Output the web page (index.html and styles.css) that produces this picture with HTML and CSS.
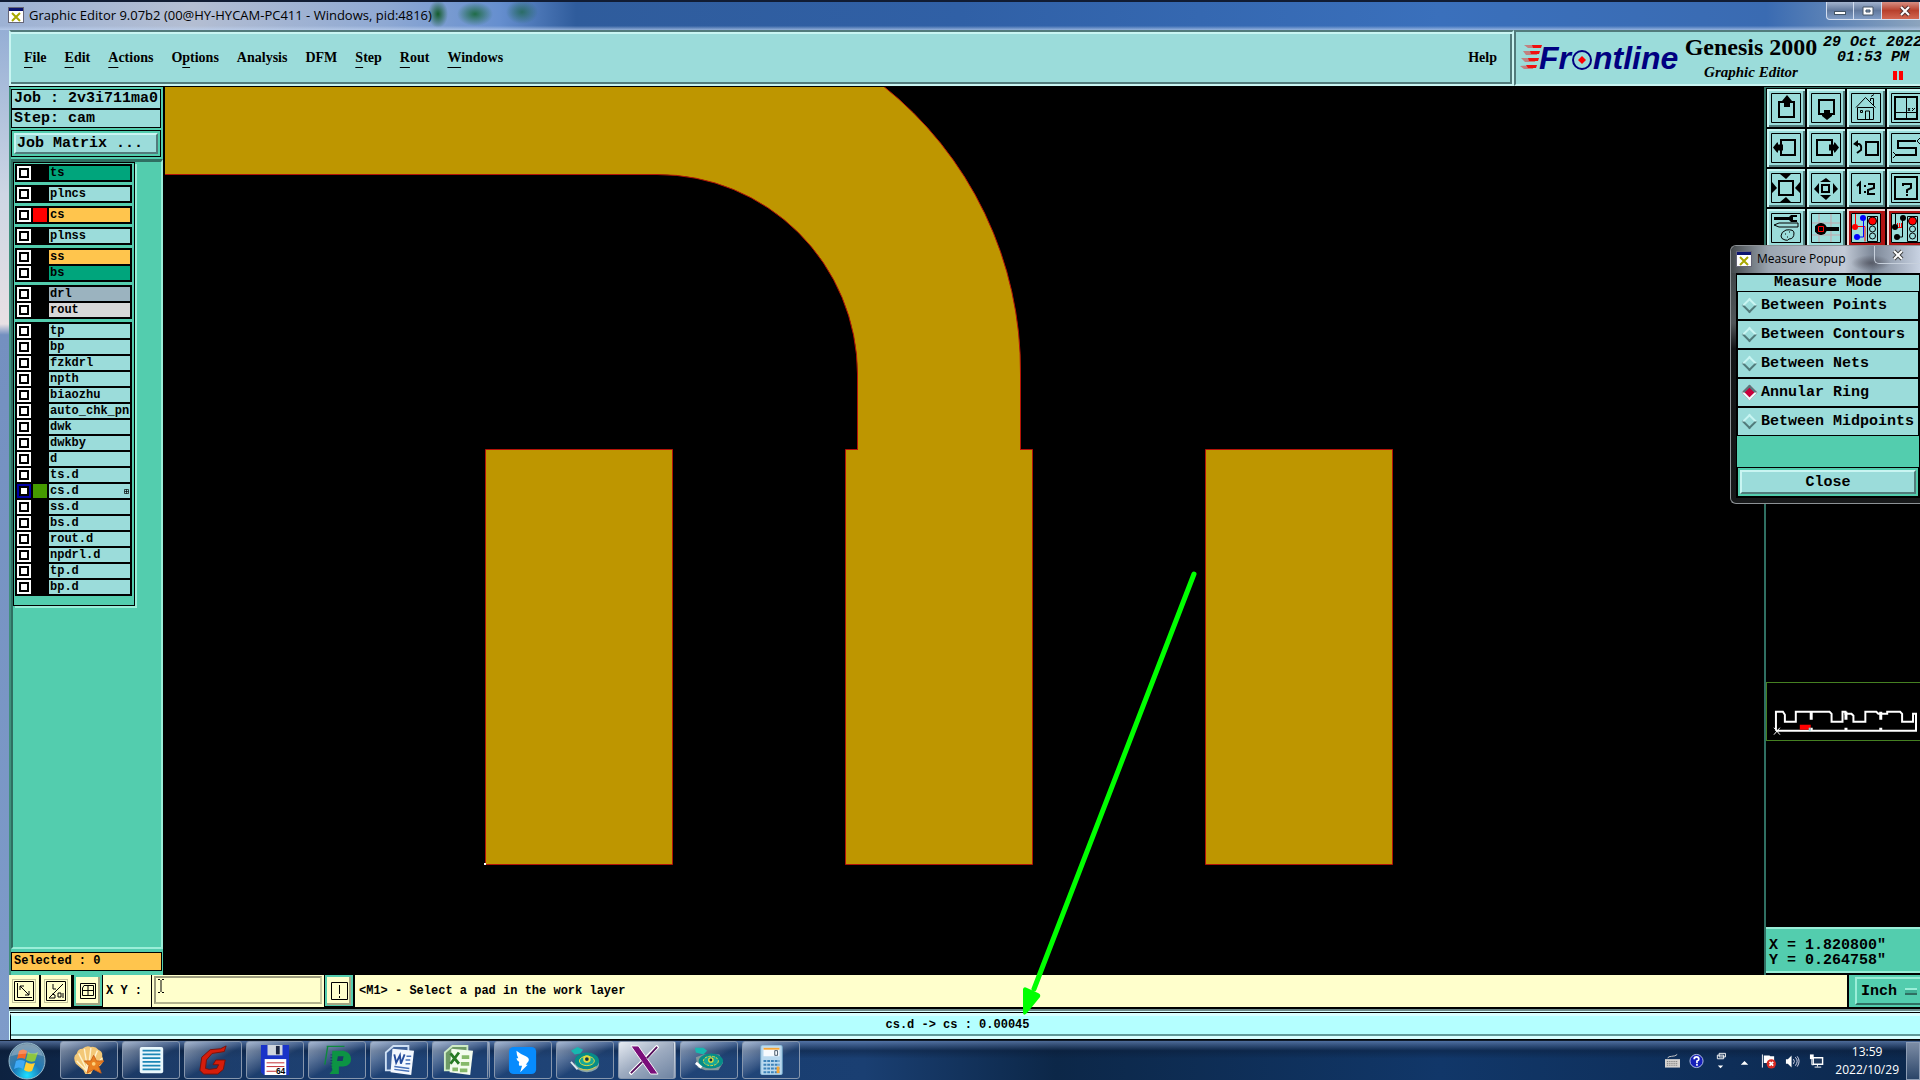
FILE: index.html
```html
<!doctype html>
<html lang="en">
  <head>
    <meta charset="UTF-8" />
    <meta name="viewport" content="width=device-width, initial-scale=1.0" />
    <title>Graphic Editor 9.07b2</title>
    <link rel="stylesheet" href="styles.css">
  </head>
  <body>
    <header class="titlebar">
      <svg class="x-icon" viewBox="0 0 16 16"><rect width="16" height="16" fill="#667" /><rect x="1" y="4" width="14" height="11" fill="#fff" /><rect x="1" y="1" width="14" height="3" fill="#0a1370" /><path d="M4 6l8 8M12 6l-8 8" stroke="#a8a800" stroke-width="2" /></svg>
      <span class="titlebar-text">Graphic Editor 9.07b2 (00@HY-HYCAM-PC411 - Windows, pid:4816)</span>
      <div class="window-buttons">
        <button class="win-btn" aria-label="Minimize"><svg viewBox="0 0 16 12"><rect x="2.500" y="6.500" width="11" height="3" fill="#fff" stroke="#456" /></svg></button>
        <button class="win-btn" aria-label="Maximize"><svg viewBox="0 0 16 12"><path d="M3 2h10v8H3z" fill="#fff" stroke="#456" /><path d="M6 5h4v2H6z" fill="#7c95b8" stroke="#456" /></svg></button>
        <button class="win-btn win-close" aria-label="Close window"><svg viewBox="0 0 16 12"><path d="M4 2l8 8M12 2l-8 8" stroke="#533" stroke-width="4" /><path d="M4 2l8 8M12 2l-8 8" stroke="#fff" stroke-width="2" /></svg></button>
      </div>
    </header>

    <div class="app">
      <div class="topbar">
        <nav class="menubar">
          <button><u>F</u>ile</button>
          <button><u>E</u>dit</button>
          <button><u>A</u>ctions</button>
          <button>O<u>p</u>tions</button>
          <button>Analysis</button>
          <button>DFM</button>
          <button><u>S</u>tep</button>
          <button><u>R</u>out</button>
          <button><u>W</u>indows</button>
          <button class="help">Help</button>
        </nav>
        <div class="brand">
          <svg class="logo" viewBox="0 0 162 40">
            <g fill="#f01010">
              <path d="M4 8l16 0-1 3H8zM3 14l15 0-1 4H6zM1 21l15 0-1 4H5zM0 29l14-1-1 4H4z" opacity=".45" />
              <path d="M12 8h10l-1 3h-8zM10 14h10l-1 3H11zM8 21h11l-1 3H9zM6 28h11l-1 3H8z" />
            </g>
            <text x="19" y="32" class="logo-text">Fr</text>
            <circle cx="62" cy="23" r="9" fill="none" stroke="#000080" stroke-width="2" />
            <path d="M62 19l4 4-4 4-4-4z" fill="#f00" />
            <text x="73" y="32" class="logo-text">ntline</text>
          </svg>
          <div class="product">
            <strong>Genesis 2000</strong>
            <em>Graphic Editor</em>
          </div>
          <div class="clock">
            <span>29 Oct 2022</span>
            <span class="clock-time">01:53 PM</span>
            <i class="pause"></i>
          </div>
        </div>
      </div>

      <main class="workspace">
        <aside class="sidebar">
          <div class="job">
            <div class="job-line">Job : 2v3i711ma0</div>
            <div class="job-line">Step: cam</div>
            <div class="job-matrix"><button>Job Matrix ...</button></div>
          </div>
          <div class="layers-area">
            <div class="layers">
              <div class="layer-group">
                <label class="layer mask"><input type="checkbox" /><i></i><span>ts</span></label>
              </div>
              <div class="layer-group">
                <label class="layer"><input type="checkbox" /><i></i><span>plncs</span></label>
              </div>
              <div class="layer-group">
                <label class="layer signal"><input type="checkbox" /><i class="red"></i><span>cs</span></label>
              </div>
              <div class="layer-group">
                <label class="layer"><input type="checkbox" /><i></i><span>plnss</span></label>
              </div>
              <div class="layer-group">
                <label class="layer signal"><input type="checkbox" /><i></i><span>ss</span></label>
                <label class="layer mask"><input type="checkbox" /><i></i><span>bs</span></label>
              </div>
              <div class="layer-group">
                <label class="layer drill"><input type="checkbox" /><i></i><span>drl</span></label>
                <label class="layer rout"><input type="checkbox" /><i></i><span>rout</span></label>
              </div>
              <div class="layer-group">
                <label class="layer"><input type="checkbox" /><i></i><span>tp</span></label>
                <label class="layer"><input type="checkbox" /><i></i><span>bp</span></label>
                <label class="layer"><input type="checkbox" /><i></i><span>fzkdrl</span></label>
                <label class="layer"><input type="checkbox" /><i></i><span>npth</span></label>
                <label class="layer"><input type="checkbox" /><i></i><span>biaozhu</span></label>
                <label class="layer"><input type="checkbox" /><i></i><span>auto_chk_pnl</span></label>
                <label class="layer"><input type="checkbox" /><i></i><span>dwk</span></label>
                <label class="layer"><input type="checkbox" /><i></i><span>dwkby</span></label>
                <label class="layer"><input type="checkbox" /><i></i><span>d</span></label>
                <label class="layer"><input type="checkbox" /><i></i><span>ts.d</span></label>
                <label class="layer work"><input type="checkbox" checked /><i class="green"></i><span>cs.d<svg class="grid-mark" viewBox="0 0 5 5"><path d="M.5.5h4v4h-4zM.5 2.500h4M2.500.5v4" fill="none" stroke="#000" stroke-width=".7" /></svg></span></label>
                <label class="layer"><input type="checkbox" /><i></i><span>ss.d</span></label>
                <label class="layer"><input type="checkbox" /><i></i><span>bs.d</span></label>
                <label class="layer"><input type="checkbox" /><i></i><span>rout.d</span></label>
                <label class="layer"><input type="checkbox" /><i></i><span>npdrl.d</span></label>
                <label class="layer"><input type="checkbox" /><i></i><span>tp.d</span></label>
                <label class="layer"><input type="checkbox" /><i></i><span>bp.d</span></label>
              </div>
            </div>
          </div>
          <div class="selected">Selected : 0</div>
        </aside>

        <div class="board">
          <svg viewBox="0 0 1600 888" preserveAspectRatio="xMinYMin slice">
            <g fill="#be9600" stroke="#b41408" stroke-width="1">
              <path d="M-2 -2H717A364 364 0 0 1 855.500 287V362.500H692.500V287A200 200 0 0 0 492 87.500H-2z" />
              <path d="M320.500 362.500h187v415h-187zM1040.500 362.500h187v415h-187z" />
              <path d="M680.500 362.500h187v415h-187z" />
            </g>
            <path d="M693 361h162v4H693z" fill="#be9600" />
            <path d="M319 776h2v2h-2z" fill="#fff" />
          </svg>
        </div>

        <aside class="tools">
          <div class="toolbar">
            <button aria-label="Pan up"><svg viewBox="0 0 38 38"><path class="frame" d="M4.500 4.500h29v29h-29z" /><path class="bold" d="M12 13h15v15H12z" /><path d="M20 6l5 6v1h-2v5h-6v-5h-2v-1z" /></svg></button>
            <button aria-label="Pan down"><svg viewBox="0 0 38 38"><path class="frame" d="M4.500 4.500h29v29h-29z" /><path class="bold" d="M12 11h15v14H12z" /><path d="M20 31l-5-4v-1h2v-5h6v5h2v1z" /></svg></button>
            <button aria-label="Home"><svg viewBox="0 0 38 38"><path class="frame" d="M4.500 4.500h29v29h-29z" /><path class="thin" d="M9 18.500L18.500 8.500l10 10M10.500 18.500h16v12h-16zM18.500 30v-8h4v8M13.500 21.500h2v2h-2zM23.500 12V9.500h3V16M24 7.500l3-2" /></svg></button>
            <button aria-label="Window XY"><svg viewBox="0 0 38 38"><path class="frame" d="M4.500 4.500h29v29h-29z" /><path class="bold" d="M8 8h22v22H8z" /><path class="thin" d="M19.500 8v22M8 23.500h22M21 19l2 3M23 19l-2 3M25 19l2 2M28 19l-3 3" /></svg></button>

            <button aria-label="Pan left"><svg viewBox="0 0 38 38"><path class="frame" d="M4.500 4.500h29v29h-29z" /><path class="bold" d="M14 11h14v15H14z" /><path d="M6 18.500l4-5h1v2h5v6h-5v2h-1z" /></svg></button>
            <button aria-label="Pan right"><svg viewBox="0 0 38 38"><path class="frame" d="M4.500 4.500h29v29h-29z" /><path class="bold" d="M10 11h15v15H10z" /><path d="M32 18.500l-4-5h-1v2h-5v6h5v2h1z" /></svg></button>
            <button aria-label="Previous view"><svg viewBox="0 0 38 38"><path class="frame" d="M4.500 4.500h29v29h-29z" /><path class="bold" d="M19 13h12v13H19z" /><path class="curve" d="M9 15h3q3 1 2 6l-4 3" /><path d="M6 15l5-4v7z" /></svg></button>
            <button aria-label="Snake"><svg viewBox="0 0 38 38"><path class="frame" d="M4.500 4.500h29v29h-29z" /><path class="bold" d="M29 12H11v7h18v7H9" /><path class="thin" d="M33 9l-3 3 3 3M6 23l3 3-3 3" /></svg></button>

            <button aria-label="Zoom in"><svg viewBox="0 0 38 38"><path class="frame" d="M4.500 4.500h29v29h-29z" /><path class="bold" d="M12 12h14v14H12z" /><path d="M13 5h11l-5 5zM13 33h11l-5-5zM5 13v11l5-5zM33 13v11l-5-5z" /></svg></button>
            <button aria-label="Zoom out"><svg viewBox="0 0 38 38"><path class="frame" d="M4.500 4.500h29v29h-29z" /><path class="bold" d="M15 16h7v7h-7z" /><path d="M13 13h11l-5-4zM13 26h11l-5 5zM12 14v11l-5-5zM26 14v11l5-5z" /></svg></button>
            <button aria-label="Scale 1:2"><svg viewBox="0 0 38 38"><path class="frame" d="M4.500 4.500h29v29h-29z" /><path class="curve" d="M10 17l3-3v11M21 15h6v4l-6 2v4h7" /><path d="M17 16h2v2h-2zM17 22h2v2h-2z" /></svg></button>
            <button aria-label="Query"><svg viewBox="0 0 38 38"><path class="frame" d="M4.500 4.500h29v29h-29z" /><path class="bold" d="M8 8h22v22H8zM16 17v-2h8v4l-4 2v3M20 25v2" /></svg></button>

            <button aria-label="Settings"><svg viewBox="0 0 38 38"><path class="frame" d="M4.500 4.500h29v29h-29z" /><path d="M7 8h15l2-2h6v2h-4v3h4v2h-6l-2-2H7z" /><path class="thin" d="M7 16l5-2h19v4H12zM14 27q0-4 5-6 8-1 8 3 0 6-5 6-1 2-4 1-4-1-4-4M18 25h1M22 23h1M20 28h1" /></svg></button>
            <button aria-label="Probe"><svg viewBox="0 0 38 38"><path class="frame" d="M4.500 4.500h29v29h-29z" /><path d="M12 5v28M24 5v28M5 14h28M5 26h28" stroke="#c3a7ad" /><path d="M14 14l5 4h13v4H19l-5 4-6-3v-6z" /><circle cx="14" cy="20" r="6" /><path d="M11.500 17.500h5v5h-5z" fill="none" stroke="#f00" /></svg></button>
            <button class="alert" aria-label="Net check"><svg viewBox="0 0 38 38"><path class="frame" d="M4.500 4.500h29v29h-29zM20.500 7.500h10v25h-10z" /><path d="M8.500 5v12.500h9.500v15" fill="none" stroke="#f00" /><path d="M16.500 9v19H10" fill="none" stroke="#00f" /><circle cx="8" cy="18" r="3" fill="#f00" /><circle cx="16" cy="9" r="3" fill="#00f" /><circle cx="10" cy="28" r="3" fill="#00f" /><circle cx="25.500" cy="12" r="4" fill="#f00" stroke="#000" /><circle class="thin" cx="25.500" cy="20" r="3" /><circle class="thin" cx="25.500" cy="27" r="3" /></svg></button>
            <button class="alert" aria-label="Short check"><svg viewBox="0 0 38 38"><path class="frame" d="M4.500 4.500h29v29h-29zM20.500 7.500h10v25h-10z" /><path class="thin" d="M8.500 5v12M15.500 9v19H10" /><path d="M10 18.500h5M10.500 14v4M12.500 14v4M14.500 14v4" fill="none" stroke="#f00" /><circle cx="8" cy="18" r="3" /><circle cx="16" cy="9" r="3" /><circle cx="10" cy="28" r="3" /><circle cx="25.500" cy="12" r="4" fill="#f00" stroke="#000" /><circle class="thin" cx="25.500" cy="20" r="3" /><circle class="thin" cx="25.500" cy="27" r="3" /></svg></button>
          </div>
          <div class="overview">
            <div class="minimap">
              <svg viewBox="0 0 154 57">
                <path d="M9 48V29h7l2 3v7h11V29h34l2 2v8h11V29h3v2h6l2 2v6h12V29h11l2 2h9v-2h13l2 2v8h11v-8h3v17H9" fill="none" stroke="#fff" stroke-width="2" />
                <path d="M43 29h3v8h-3zM43 45h3v3h-3zM78 29h3v8h-3zM78 45h3v3h-3zM113 29h3v8h-3zM113 45h3v3h-3z" fill="#fff" />
                <path d="M33 42h11v5H33z" fill="#f00" />
                <path d="M42 45h2v3h-2z" fill="#8dd" />
                <path d="M7 45l6 7M13 45l-6 7" stroke="#fff" />
              </svg>
            </div>
          </div>
          <div class="coords">
            <div>X = 1.820800"</div>
            <div>Y = 0.264758"</div>
          </div>
        </aside>
      </main>

      <div class="command-bar">
        <button class="cmd-btn" aria-label="Snap line"><svg viewBox="0 0 20 20"><path d="M.5.5h19v19H.500zM3.500 2v14.500H18M6 5l9 9M6 5h4M6 5v4M15 14h-4M15 14v-4" /></svg></button>
        <button class="cmd-btn" aria-label="Angle snap"><svg viewBox="0 0 20 20"><path d="M.5.5h19v19H.500zM3 17L17 3M7 3v5h3M3 17h6v-3l-3-1M12 12v4h3v-4zM17 12v5" /></svg></button>
        <button class="cmd-btn cmd-raised" aria-label="Grid"><svg viewBox="0 0 20 20"><path d="M2.500 2.500h15v15h-15zM6 4.500h9.500v10h-11V7zM10 4.500v10M4.500 9.500h11" /></svg></button>
        <label class="xy-label" for="xy">X Y :</label>
        <div class="xy-field">
          <input id="xy" type="text" />
          <svg class="ibeam" viewBox="0 0 6 14"><path d="M0 .5h2M4 .5h2M0 13.500h2M4 13.500h2M3 1v12" stroke="#000" /></svg>
        </div>
        <button class="cmd-btn cmd-raised" aria-label="Abort"><svg viewBox="0 0 20 20"><path d="M2.500 1.500h16v17h-16zM10.500 4v9M10.500 15v2" /></svg></button>
        <div class="prompt">&lt;M1&gt; - Select a pad in the work layer</div>
        <div class="units">
          <select aria-label="Units"><option>Inch</option><option>MM</option></select>
        </div>
      </div>
      <div class="status"><span>cs.d -&gt; cs : 0.00045</span></div>
    </div>

    <svg class="arrow" viewBox="0 0 180 446">
      <path d="M174 3L14 418" stroke="#0f0" stroke-width="5" stroke-linecap="round" />
      <path d="M3 418q1-3 4-1l11 5q3 1 2 4L7 442q-4 4-4-1z" fill="#0f0" />
    </svg>

    <section class="popup">
      <div class="popup-title">
        <svg class="x-icon" viewBox="0 0 16 16"><rect width="16" height="16" fill="#667" /><rect x="1" y="4" width="14" height="11" fill="#fff" /><rect x="1" y="1" width="14" height="3" fill="#0a1370" /><path d="M4 6l8 8M12 6l-8 8" stroke="#a8a800" stroke-width="2" /></svg>
        <span>Measure Popup</span>
        <button aria-label="Close popup"><svg viewBox="0 0 16 12"><path d="M4 2l8 8M12 2l-8 8" stroke="#444" stroke-width="4" /><path d="M4 2l8 8M12 2l-8 8" stroke="#fff" stroke-width="2" /></svg></button>
      </div>
      <div class="popup-body">
        <div class="popup-heading">Measure Mode</div>
        <label class="mode"><input type="radio" name="mode" />Between Points</label>
        <label class="mode"><input type="radio" name="mode" />Between Contours</label>
        <label class="mode"><input type="radio" name="mode" />Between Nets</label>
        <label class="mode"><input type="radio" name="mode" checked />Annular Ring</label>
        <label class="mode"><input type="radio" name="mode" />Between Midpoints</label>
        <div class="popup-close"><button>Close</button></div>
      </div>
    </section>

    <footer class="taskbar">
      <button class="start" aria-label="Start">
        <svg viewBox="0 0 38 38">
          <defs><radialGradient id="orb" cx="50%" cy="90%" r="85%"><stop offset="0" stop-color="#1ee0ff" /><stop offset=".45" stop-color="#1b79b8" /><stop offset="1" stop-color="#5b7f99" /></radialGradient></defs>
          <circle cx="19" cy="19" r="18" fill="url(#orb)" stroke="#9bc" />
          <path d="M11 9q4-3 8 0l-2 8q-4-2-8 0z" fill="#f2692a" />
          <path d="M20 10q5 3 10 0l-3 9q-4 2-9-1z" fill="#8dc63f" />
          <path d="M8 19q4-2 9 0l-2 8q-4-3-9 0z" fill="#3fa9f5" />
          <path d="M18 20q4 3 9 1l-3 8q-4 2-8-1z" fill="#ffce33" />
          <path d="M3 14Q7 2 19 2t16 12q-16-5-32 0z" fill="#fff" opacity=".25" />
        </svg>
      </button>
      <div class="tasks">
        <button aria-label="Shell"><svg viewBox="0 0 32 32"><path d="M12 31l-2-4L2 20q-4-8 1-11Q4 4 9 4q4-4 9-2 5-1 8 3 5 2 4 7 3 6-2 10l-8 5-2 4z" fill="#f3c877" /><path d="M15 29L3 17M15 29L5 9M15 29L11 4M15 29L18 3M15 29L25 6M15 29L30 14" stroke="#fff1cb" stroke-width="1.500" /><path d="M21 11l3 6 8 0-6 5 3 8-8-4-7 4 2-8-5-5 7 0z" fill="#e98122" stroke="#c9601a" /><circle cx="21" cy="20" r="2" fill="#ffd27a" /></svg></button>
        <button aria-label="Notes"><svg viewBox="0 0 32 32"><rect x="4" y="2" width="25" height="28" rx="2" fill="#e9f7fc" /><path d="M7 6h19M7 10h19M7 14h19M7 18h19M7 22h19M7 26h19" stroke="#1d86b4" stroke-width="2" /></svg></button>
        <button aria-label="G viewer"><svg viewBox="0 0 32 32"><path d="M30 1l-2 6-13 2-6 7-1 9 4 1 8-1 2-4h-6l3-5h10l-2 10-6 5H6l-4-4 2-14L13 5l11-1z" fill="#d51d0b" stroke="#7c1008" /></svg></button>
        <button aria-label="Save tool"><svg viewBox="0 0 32 32"><path d="M1 0h30v32H4l-3-3z" fill="#1a34c8" /><path d="M8 0h16v11H8z" fill="#cfd5dd" /><path d="M17 1h4v9h-4z" fill="#1a2440" /><path d="M5 15h23v17H5z" fill="#fff" /><path d="M7 19h19M7 23h19M7 28h10" stroke="#c0222a" /><text x="17" y="31" class="floppy-text">64</text></svg></button>
        <button aria-label="P tool"><svg viewBox="0 0 32 32"><path d="M5 1.500h19M6 2L3 21" fill="none" stroke="#0d8a3d" stroke-width="1.500" /><path d="M11 6h12q8 2 8 9t-8 8h-5v8H8l3-4-1-5z" fill="#0c9444" /><path d="M17 12h6l-1 5h-6z" fill="#1b3c66" /><path d="M10 10v18" stroke="#1b3c66" stroke-width="2" stroke-dasharray="1 2" /></svg></button>
        <button aria-label="Word"><svg viewBox="0 0 32 32"><path d="M10 1h16v26H2V8z" fill="#3f6299" stroke="#cfe0f4" stroke-width="2" /><path d="M9 4l23 2-3 26-22-3z" fill="#f4f8fe" /><path d="M11 10l2 9 4-8 1 9 4-10" fill="none" stroke="#244b9b" stroke-width="2" /><path d="M24 12h5M23 16h5M23 20h5M11 23l16 2M11 26l16 2" stroke="#4670b8" stroke-width="1.500" /></svg></button>
        <button class="stacked" aria-label="Excel"><svg viewBox="0 0 32 32"><path d="M10 1h16v26H2V8z" fill="#6d9a66" stroke="#cfecc8" stroke-width="2" /><path d="M9 4l23 2-3 26-22-3z" fill="#f4fcee" /><path d="M8 9l9 11M17 8L8 20" stroke="#287a25" stroke-width="3" /><path d="M20 11h8v4h-8zM19 18h9v4h-9zM10 24h6v4h-6zM18 25h8v4h-8z" fill="#86b96a" /></svg></button>
        <button aria-label="Messenger"><svg viewBox="0 0 32 32"><rect x="1" y="2" width="29" height="29" rx="5" fill="#078bfd" /><path d="M9 6q5 4 10 6 4 2 3 5l-3 4 2 0-8 8 2-7-3 0q-1-2 0-4-3-2-3-4l2 0q-2-4-2-8z" fill="#fff" /></svg></button>
        <button aria-label="Genesis tape"><svg viewBox="0 0 32 32"><path d="M1 6l7-4 6 3-3 4-6 1z" fill="#17b8b0" /><ellipse cx="18" cy="20" rx="13" ry="9" fill="#8aa5a8" /><ellipse cx="18" cy="17" rx="13" ry="9" fill="#078c88" /><ellipse cx="18" cy="17" rx="8" ry="5" fill="#16a898" stroke="#e3db3e" /><circle cx="18" cy="15" r="4" fill="#e3db3e" /><circle cx="18" cy="15" r="2" fill="#134" /><path d="M1 18l7 8" stroke="#dfe8ee" stroke-width="2" /><path d="M10 25q9 4 18-2" fill="none" stroke="#dfcf3e" /></svg></button>
        <button class="active stacked" aria-label="X server"><svg viewBox="0 0 32 32"><path d="M31 1L1 31" stroke="#fff" stroke-width="4" /><path d="M2 1h8l21 30h-8z" fill="#7a0e7a" stroke="#fff" /><path d="M30 2L19 14M14 18L2 30" stroke="#54105c" stroke-width="2" /></svg></button>
        <button aria-label="Genesis tape 2"><svg viewBox="0 0 32 32"><path d="M1 3h9l4 3-4 4-8-2z" fill="#17b8b0" /><path d="M2 13l8-3h17l4 9-5 8H12l-8-3z" fill="#85999c" /><ellipse cx="18" cy="17" rx="13" ry="8" fill="#078c88" /><ellipse cx="18" cy="17" rx="8" ry="5" fill="#16a898" stroke="#e3db3e" stroke-dasharray="3 1" /><circle cx="18" cy="16" r="3" fill="#e3db3e" /><circle cx="18" cy="16" r="1.500" fill="#134" /><path d="M2 19l6 5" stroke="#fff" stroke-width="3" /></svg></button>
        <button aria-label="Calculator"><svg viewBox="0 0 32 32"><rect x="5" y="0" width="23" height="32" rx="2" fill="#b9d9ef" stroke="#6fa3c8" /><path d="M8 3h17v9H8z" fill="#f6fafe" /><path d="M8 3h17v2H8z" fill="#f4a335" /><path d="M20 6h3v5h-3z" fill="none" stroke="#456" /><path d="M8 17h17M8 21h17M8 25h17M8 29h17" stroke="#3d82b8" stroke-width="2" stroke-dasharray="3 1" /><path d="M22 23h3v7h-3z" fill="#f4a335" /></svg></button>
      </div>
      <div class="tray">
        <svg viewBox="0 0 16 16"><path d="M0 6h16v9H0z" fill="#d6d3d0" /><path d="M2 8.500h12M2 10.500h12M2 12.500h12" stroke="#666" stroke-dasharray="1 1" /><path d="M3 5q0-2 4-2t6-2" fill="none" stroke="#ccc" /></svg>
        <svg viewBox="0 0 16 16"><circle cx="8" cy="8" r="7" fill="#1620b8" stroke="#b9c3e8" /><path d="M5.500 6q0-2.500 2.500-2.500t2.500 2.500q0 1-2 2v2M8.500 11v2" fill="none" stroke="#fff" stroke-width="1.800" /></svg>
        <svg viewBox="0 0 16 20"><path d="M6.500 1.500h7v4h-7zM4.500 3.500h7v4h-7z" fill="#1b3558" stroke="#fff" /><path d="M5 15h6l-3 3z" fill="#fff" /></svg>
        <svg viewBox="0 0 16 16"><path d="M4 12l4-4 4 4z" fill="#fff" /></svg>
        <svg viewBox="0 0 16 16"><path d="M1.500 1v14" stroke="#fff" /><path d="M3 2h6l1 1h4v7H3z" fill="#fff" /><circle cx="11" cy="11" r="5" fill="#d92a22" /><path d="M9 9l4 4M13 9l-4 4" stroke="#fff" stroke-width="1.800" /></svg>
        <svg viewBox="0 0 16 16"><path d="M1 6h2l4-4v13l-4-4H1z" fill="#fff" /><path d="M9 6q2 2 0 5M11 4q4 4 0 9M13 3q4 5 0 11" fill="none" stroke="#dde" /></svg>
        <svg viewBox="0 0 16 16"><path d="M4.500 4.500h10v7h-10z" fill="#1b3558" stroke="#fff" stroke-width="1.500" /><path d="M9 12v2M6 14.500h7" stroke="#fff" /><path d="M1 1h4v5H1z" fill="#fff" /><path d="M3 6v6h2" fill="none" stroke="#fff" /></svg>
        <div class="tray-clock"><span>13:59</span><span>2022/10/29</span></div>
        <button class="show-desktop" aria-label="Show desktop"></button>
      </div>
    </footer>
  </body>
</html>
```
FILE: styles.css
```css
:root {
  --cyan: #9bdcda;
  --teal: #53cdae;
  --teal-light: #9aeed8;
  --teal-dark: #2f6f62;
  --bevel-light: #c9f5f2;
  --bevel-dark: #527b7b;
  --cream: #ffffcc;
  --orange: #ffc54d;
  --mask: #00a57c;
  --mono: "Liberation Mono", "Courier New", monospace;
  --serif: "Liberation Serif", "Times New Roman", serif;
  --ui: "Open Sans", "Noto Sans", sans-serif;
}

* {
  margin: 0;
  padding: 0;
  box-sizing: border-box;
}

body {
  height: 100vh;
  display: flex;
  flex-direction: column;
  position: relative;
  overflow: hidden;
  background: linear-gradient(#8ba7d2, #cdd6e4 18%, #e8e0e4 30%, #7490c0 31%, #7f9cca);
  font-family: var(--mono);
  font-size: 12px;
  font-weight: 700;
  color: #000;
}

button,
input,
select {
  font: inherit;
  color: inherit;
  border: none;
  border-radius: 0;
  background: none;
}

svg {
  display: block;
}

/* window title */
.titlebar {
  flex: none;
  height: 30px;
  display: flex;
  align-items: center;
  gap: 5px;
  padding: 0 0 2px 8px;
  border-top: 2px solid #111c33;
  background:
    linear-gradient(transparent 85%, rgba(190, 210, 240, 0.7)),
    radial-gradient(ellipse 10px 14px at 438px 12px, #145c2c, transparent),
    radial-gradient(ellipse 18px 12px at 475px 12px, #206c48, transparent),
    radial-gradient(ellipse 16px 12px at 522px 10px, #2a6c66, transparent),
    linear-gradient(90deg, #9db2d4, #b4bed2 10%, #8fa9d3 20%, #668fcf 26%, #2f5c9c 30%, #3060a6 50%, #3a70bc 75%, #3a6bb2 92%, #8ca4bd);
}

.x-icon {
  width: 16px;
  height: 16px;
  flex: none;
}

.titlebar-text {
  font: 400 13px var(--ui);
}

.window-buttons {
  align-self: flex-start;
  display: flex;
  margin-left: auto;
}

.win-btn {
  width: 28px;
  height: 18px;
  display: grid;
  place-items: center;
  border: 1px solid #d3def0;
  border-top: none;
  border-bottom-left-radius: 4px;
  background: linear-gradient(#a3b4cf, #62799d 50%, #7f9cc5);
}

.win-btn + .win-btn {
  border-left: none;
  border-radius: 0;
}

.win-btn svg {
  width: 16px;
  height: 12px;
}

.win-close {
  width: 38px;
  padding-left: 8px;
  background: linear-gradient(#d88f83, #b8402c 50%, #d26752);
}

/* application frame */
.app {
  flex: 1;
  min-height: 0;
  display: flex;
  flex-direction: column;
  margin-left: 9px;
  background: #000;
}

.topbar {
  flex: none;
  display: flex;
  height: 57px;
  border-bottom: 1px solid #000;
}

.menubar {
  flex: 1;
  display: flex;
  align-items: center;
  gap: 18px;
  padding: 0 13px;
  border: 2px solid var(--bevel-light);
  border-top-color: var(--bevel-dark);
  background: var(--cyan);
  box-shadow: inset 0 2px var(--bevel-light), inset -2px -2px var(--bevel-dark);
  font: 700 14px var(--serif);
}

.menubar u {
  text-underline-offset: 5px;
}

.help {
  margin-left: auto;
  margin-right: 2px;
}

.brand {
  flex: none;
  width: 406px;
  display: flex;
  overflow: hidden;
  padding-left: 4px;
  border-left: 2px solid var(--bevel-dark);
  border-top: 2px solid var(--bevel-dark);
  border-bottom: 2px solid var(--bevel-light);
  background: var(--cyan);
}

.logo {
  flex: none;
  width: 162px;
  height: 40px;
  margin-top: 5px;
}

.logo-text {
  font: italic 700 32px "Liberation Sans", Arial, sans-serif;
  fill: #000080;
}

.product {
  flex: none;
  width: 138px;
  text-align: center;
  font-family: var(--serif);
}

.product strong {
  display: block;
  font-size: 24px;
  line-height: 30px;
}

.product em {
  font-size: 15px;
  line-height: 20px;
}

.clock {
  flex: none;
  width: 104px;
  padding: 3px 0 0 3px;
  font: italic 700 15px/15px var(--mono);
}

.clock span {
  display: block;
}

.clock-time {
  padding-left: 14px;
}

.pause {
  display: block;
  width: 10px;
  height: 9px;
  margin: 6px 0 0 70px;
  border: solid #f00;
  border-width: 0 4px;
}

.workspace {
  flex: 1;
  min-height: 0;
  display: grid;
  grid-template-columns: 156px 1fr 156px;
}

/* layer list */
.sidebar {
  display: flex;
  flex-direction: column;
  min-width: 0;
  border-left: 2px solid #3f8f7c;
  border-right: 2px solid #000;
  background: var(--teal);
}

.job {
  padding: 2px 2px 0 0;
  font-size: 15px;
}

.job-line {
  height: 20px;
  overflow: hidden;
  padding-left: 2px;
  border: 1px solid #000;
  background: var(--cyan);
  line-height: 18px;
  white-space: nowrap;
}

.job-line + .job-line {
  height: 19px;
}

.job-matrix {
  margin: 2px 0;
  padding: 2px;
  border: 1px solid #000;
}

.job-matrix button {
  display: block;
  width: 100%;
  height: 21px;
  padding-left: 1px;
  border: 2px solid;
  border-color: var(--bevel-light) var(--bevel-dark) var(--bevel-dark) var(--bevel-light);
  background: var(--cyan);
  line-height: 17px;
  text-align: left;
}

.layers-area {
  flex: 1;
  min-height: 0;
  border-left: 2px solid var(--teal-dark);
  border-top: 3px solid var(--teal-dark);
  border-right: 2px solid var(--teal-light);
  border-bottom: 2px solid var(--teal-light);
}

.layers {
  width: 122px;
  display: flex;
  flex-direction: column;
  gap: 3px;
  padding: 1px 2px 9px 1px;
  border: 1px solid #000;
  box-shadow: 2px 2px var(--teal-light);
}

.layer-group {
  display: flex;
  flex-direction: column;
  gap: 2px;
  padding: 2px;
  background: #000;
}

.layer {
  height: 14px;
  display: flex;
  gap: 2px;
}

.layer input {
  appearance: none;
  flex: none;
  width: 14px;
  height: 14px;
  border: 2px solid #fff;
  background: #fff;
  box-shadow: inset 0 0 0 2px #000;
}

.layer input:checked {
  border-color: #0000a8;
}

.layer i {
  flex: none;
  width: 14px;
  background: #000;
}

.layer .red {
  background: #f00;
}

.layer .green {
  background: #459a00;
}

.layer span {
  flex: 1;
  display: flex;
  justify-content: space-between;
  align-items: center;
  min-width: 0;
  overflow: hidden;
  padding: 0 1px;
  background: var(--cyan);
  line-height: 14px;
}

.mask span {
  background: var(--mask);
}

.signal span {
  background: var(--orange);
}

.drill span {
  background: #9bb3bf;
}

.rout span {
  background: #d8d8d8;
}

.grid-mark {
  width: 5px;
  height: 5px;
}

.selected {
  flex: none;
  height: 19px;
  margin: 3px 1px 4px 0;
  padding-left: 2px;
  border: 1px solid #000;
  background: var(--orange);
  line-height: 17px;
}

/* drawing area */
.board {
  min-width: 0;
  min-height: 0;
  overflow: hidden;
}

.board svg {
  width: 100%;
  height: 100%;
}

/* tools */
.tools {
  display: flex;
  flex-direction: column;
  min-width: 0;
  overflow: hidden;
  border-left: 2px solid var(--teal-dark);
}

.toolbar {
  display: grid;
  grid-template-columns: repeat(4, 38px);
  gap: 2px;
  padding: 1px 0 0 1px;
  border-top: 1px solid var(--teal-dark);
}

.toolbar button {
  height: 38px;
  background: var(--cyan);
  box-shadow: inset 2px 2px var(--bevel-light), inset -2px -2px var(--bevel-dark);
}

.toolbar .frame,
.toolbar .thin {
  fill: none;
  stroke: #000;
}

.toolbar .bold,
.toolbar .curve {
  fill: none;
  stroke: #000;
  stroke-width: 2;
}

.toolbar .alert {
  box-shadow: inset 2px 2px #f3d8d8, inset 0 0 0 4px #b01414;
}

.overview {
  flex: 1;
  display: flex;
  flex-direction: column;
}

.overview::before {
  content: "";
  flex: 7;
}

.overview::after {
  content: "";
  flex: 3;
}

.minimap {
  border: 1px solid #458022;
  border-right: none;
}

.coords {
  height: 46px;
  margin-bottom: 2px;
  padding: 9px 3px 0;
  border-top: 2px solid var(--teal-light);
  border-bottom: 2px solid var(--teal-light);
  background: var(--teal);
  font-size: 15px;
  line-height: 15px;
  white-space: nowrap;
}

/* command line */
.command-bar {
  flex: none;
  height: 32px;
  display: flex;
  background: var(--cream);
}

.cmd-btn {
  flex: none;
  width: 32px;
  display: grid;
  place-items: center;
  border-right: 2px solid #000;
}

.cmd-btn svg {
  width: 24px;
  height: 24px;
  padding: 2px;
  box-shadow: inset 0 0 0 1px #c3c39a;
}

.cmd-btn path {
  fill: none;
  stroke: #000;
}

.cmd-raised {
  width: 30px;
  border: 1px solid #000;
  border-top: none;
  background: var(--teal);
}

.cmd-raised svg {
  width: 24px;
  height: 28px;
  background: var(--cream);
  box-shadow: inset -2px -2px #a5a584;
}

.xy-label {
  width: 48px;
  padding-left: 3px;
  line-height: 32px;
  white-space: pre;
}

.xy-field {
  position: relative;
  width: 173px;
  padding: 1px 2px;
  border-left: 1px solid #000;
}

.xy-field input {
  width: 100%;
  height: 28px;
  padding: 0 10px;
  border: 2px solid;
  border-color: #9b9b7c #c9c99f #b3b38d #9b9b7c;
  outline: none;
}

.ibeam {
  position: absolute;
  left: 6px;
  top: 4px;
  width: 6px;
  height: 14px;
}

.prompt {
  flex: 1;
  padding-left: 4px;
  border-left: 1px solid #000;
  line-height: 32px;
}

.units {
  width: 73px;
  padding: 2px 0 2px 6px;
  border-left: 2px solid #000;
  background: var(--teal);
}

.units select {
  appearance: none;
  width: 100%;
  height: 28px;
  padding-left: 4px;
  border: 2px solid;
  border-color: var(--teal-light) transparent var(--teal-dark) var(--teal-light);
  border-right: none;
  background:
    linear-gradient(var(--teal-light), var(--teal-light)) 48px 9px / 12px 2px no-repeat,
    linear-gradient(var(--teal-dark), var(--teal-dark)) 48px 14px / 12px 2px no-repeat,
    linear-gradient(#3fb095, #3fb095) 48px 9px / 12px 7px no-repeat;
  font-size: 15px;
}

.status {
  flex: none;
  height: 33px;
  padding: 4px 0 2px 1px;
  border-top: 2px solid #000;
  background:
    linear-gradient(#6d8a89, #6d8a89) 0 0 / 100% 2px no-repeat,
    #d8ffff;
}

.status span {
  display: block;
  height: 27px;
  padding-right: 16px;
  border-top: 3px solid #d8ffff;
  border-bottom: 1px solid #000;
  border-left: 1px solid #000;
  background: #b4ffff;
  box-shadow: inset 0 -3px #d8ffff, inset 0 -5px #5f9999, 0 -1px #000;
  line-height: 19px;
  text-align: center;
}

/* marker drawn over the board and the bars */
.arrow {
  position: absolute;
  left: 1020px;
  top: 571px;
  width: 180px;
  height: 446px;
}

/* measure popup */
.popup {
  position: absolute;
  right: 0;
  top: 245px;
  width: 190px;
  padding: 0 0 5px 5px;
  border: 1px solid #8d9296;
  border-right: none;
  border-radius: 6px 0 0 6px;
  background: linear-gradient(#3a3f42, #505558 30%, #121415 40%, #17191a);
  font-size: 15px;
}

.popup-title {
  height: 27px;
  display: flex;
  align-items: center;
  gap: 5px;
  margin-left: -5px;
  padding: 0 0 2px 5px;
  border-radius: 6px 0 0 0;
  background:
    radial-gradient(ellipse 20px 8px at 140px 17px, rgba(60, 60, 70, 0.6), transparent),
    linear-gradient(90deg, #44494c, #9ba5b0 20%, #c2cad6 60%, #7d8898 75%, #c8d2e2);
  font: 400 12px var(--ui);
}

.popup-title button {
  align-self: flex-start;
  width: 46px;
  height: 18px;
  display: grid;
  place-items: center;
  margin-left: auto;
  border: 1px solid #c7d0dc;
  border-width: 0 0 1px 1px;
  border-radius: 0 0 0 5px;
}

.popup-title button svg {
  width: 16px;
  height: 12px;
}

.popup-body {
  border: 1px solid #000;
  border-top: 2px solid #000;
  background: var(--teal);
}

.popup-heading {
  height: 16px;
  background: var(--cyan);
  line-height: 16px;
  text-align: center;
}

.mode {
  height: 29px;
  display: flex;
  align-items: center;
  gap: 6px;
  padding-left: 6px;
  border: 1px solid #000;
  background: var(--cyan);
  white-space: nowrap;
}

.mode input {
  appearance: none;
  flex: none;
  width: 11px;
  height: 11px;
  border: 2px solid;
  border-color: #c9f5f2 #527b7b #527b7b #c9f5f2;
  transform: rotate(45deg);
}

.mode input:checked {
  border-color: #527b7b #f0ffff #f0ffff #527b7b;
  background: #c8003c;
}

.popup-close {
  margin-top: 31px;
  padding: 2px;
  border: 1px solid #000;
}

.popup-close button {
  display: block;
  width: 100%;
  height: 24px;
  border: 2px solid;
  border-color: var(--bevel-light) var(--bevel-dark) var(--bevel-dark) var(--bevel-light);
  background: var(--cyan);
}

/* desktop taskbar */
.taskbar {
  flex: none;
  height: 40px;
  display: flex;
  border-top: 1px solid #101c2c;
  background:
    linear-gradient(rgba(120, 150, 200, 0.6), rgba(10, 25, 50, 0.4) 25%, transparent 45%),
    linear-gradient(90deg, #0d2240, #14396d 20%, #1a3f72 45%, #0c2748 55%, #113769 75%, #0c284d);
}

.start {
  width: 60px;
  padding-left: 8px;
}

.start svg {
  width: 38px;
  height: 38px;
}

.tasks {
  flex: 1;
  display: flex;
  gap: 4px;
}

.tasks button {
  width: 58px;
  height: 38px;
  display: grid;
  place-items: center;
  border: 1px solid #8696ad;
  border-radius: 3px;
  background: linear-gradient(150deg, rgba(215, 225, 240, 0.65), rgba(90, 115, 155, 0.5) 45%, rgba(40, 75, 125, 0.5) 55%);
}

.tasks svg {
  width: 30px;
  height: 30px;
}

.tasks .active {
  background: linear-gradient(150deg, #e6ebf2, #9dabc0 50%, #7085a3);
}

.tasks .stacked {
  padding-right: 4px;
  border-right: 3px double #8696ad;
}

.floppy-text {
  font: 700 9px "Liberation Sans", sans-serif;
}

.tray {
  display: flex;
  align-items: center;
  gap: 9px;
  color: #fff;
  font: 400 12px var(--ui);
}

.tray > svg {
  width: 15px;
  height: 18px;
}

.tray-clock {
  display: flex;
  flex-direction: column;
  align-items: center;
  line-height: 18px;
  margin: 0 -2px 0 2px;
}

.show-desktop {
  width: 14px;
  height: 38px;
  border: 1px solid #8d9db5;
  background: linear-gradient(#7c8ca5, #2b4569);
}
```
